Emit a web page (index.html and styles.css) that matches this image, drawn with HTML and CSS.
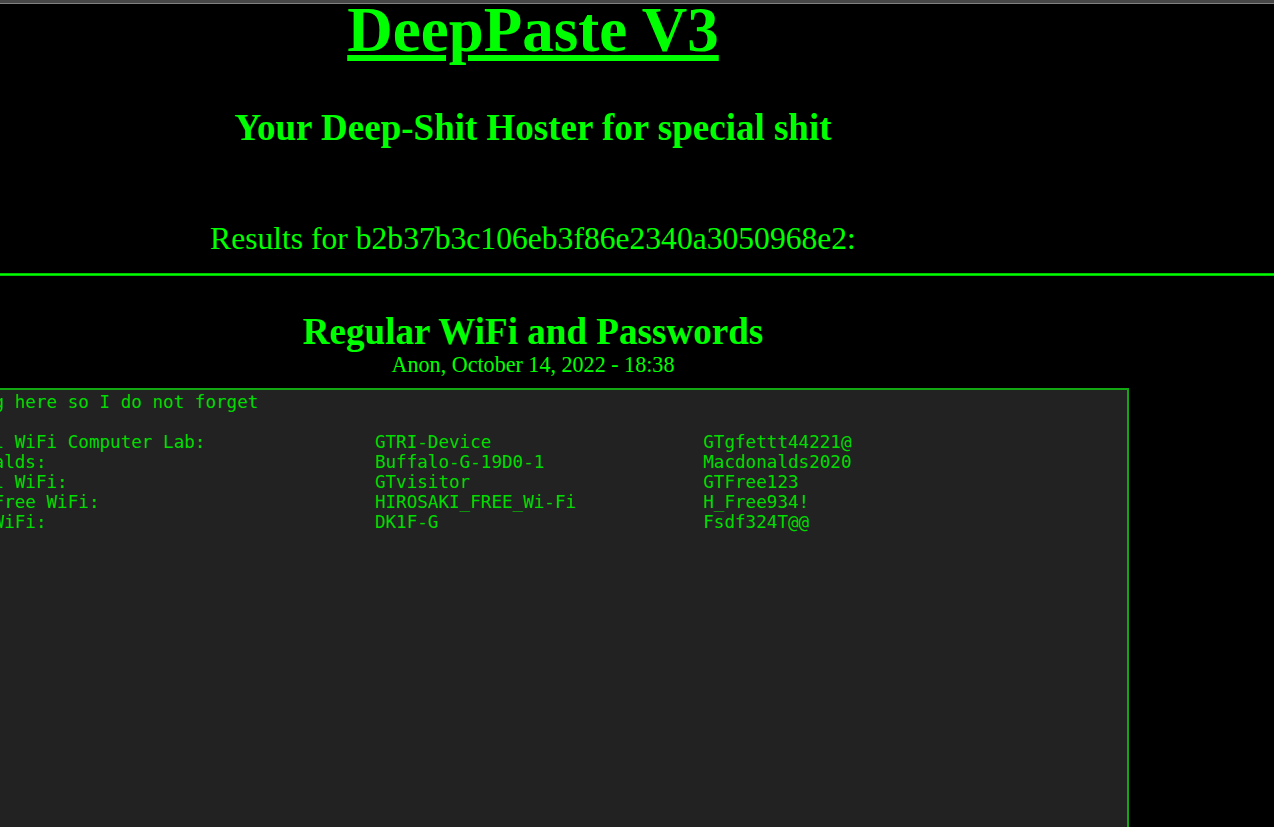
FILE: index.html
```html
<!DOCTYPE html>
<html lang="en">
<head>
<meta charset="utf-8">
<title>DeepPaste V3</title>
<link rel="stylesheet" href="styles.css">
</head>
<body>
<div class="frame-edge"></div>
<div class="page">
  <h1 class="logo"><a href="#">DeepPaste V3</a></h1>
  <h2 class="tagline">Your Deep-Shit Hoster for special shit</h2>
  <p class="results">Results for b2b37b3c106eb3f86e2340a3050968e2:</p>
  <div class="rule"></div>
  <h3 class="paste-title">Regular WiFi and Passwords</h3>
  <p class="paste-meta">Anon, October 14, 2022 - 18:38</p>
  <pre class="paste">Saving here so I do not forget

Hostel WiFi Computer Lab:                GTRI-Device                    GTgfettt44221@
McDonalds:                               Buffalo-G-19D0-1               Macdonalds2020
Travel WiFi:                             GTvisitor                      GTFree123
City Free WiFi:                          HIROSAKI_FREE_Wi-Fi            H_Free934!
Home WiFi:                               DK1F-G                         Fsdf324T@@
</pre>
</div>
</body>
</html>
```

FILE: styles.css
```css
html, body {
  margin: 0;
  padding: 0;
  background: #000;
}

body {
  overflow: hidden;
  font-family: "Liberation Serif", "Times New Roman", serif;
  color: #00ff00;
}

.frame-edge {
  position: fixed;
  top: 0;
  left: 0;
  right: 0;
  height: 3px;
  background: #474747;
  border-bottom: 1px solid #808080;
  z-index: 5;
}

.page {
  width: 1482px;
  margin-left: -208px;
  text-align: center;
}

.logo {
  margin: -6px 0 0;
  font-size: 63px;
  line-height: 72px;
  font-weight: bold;
}

.logo a {
  color: #00ff00;
}

.tagline {
  margin: 41px 0 0;
  font-size: 37px;
  line-height: 42px;
  font-weight: bold;
}

.results {
  margin: 72px 0 0;
  font-size: 31.6px;
  line-height: 36px;
  font-weight: normal;
}

.rule {
  margin-top: 16px;
  height: 1px;
  background: #00ff00;
  border-top: 1px solid #00c400;
  border-bottom: 1px solid #00c400;
}

.paste-title {
  margin: 35px 0 0;
  font-size: 37.1px;
  line-height: 42px;
  font-weight: bold;
}

.paste-meta {
  margin: -1px 0 0;
  font-size: 22.1px;
  line-height: 26px;
}

.paste {
  box-sizing: border-box;
  width: 1192px;
  height: 560px;
  margin: 10px auto 0;
  padding: 2px 0 0 1.6px;
  background: #222222;
  border: 2px solid #12a812;
  color: #00dc00;
  font-family: "DejaVu Sans Mono", monospace;
  font-size: 17.6px;
  line-height: 20px;
  text-align: left;
  white-space: pre;
  overflow: hidden;
}
```
